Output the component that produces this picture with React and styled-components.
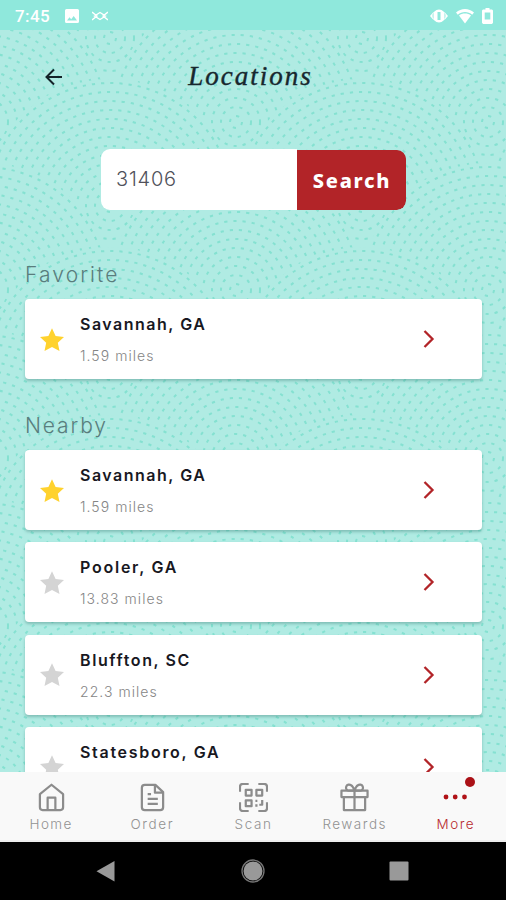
import styled, { createGlobalStyle } from "styled-components";

const rings = [6, 15, 24, 33, 42, 51, 60, 69, 78, 87, 96, 105, 114, 123];

const fans = [];
for (let row = 0; row < 11; row++) {
  for (let col = -1; col < 4; col++) {
    fans.push({ x: col * 252 + (row % 2) * 126 + 110, y: row * 84 + 8 });
  }
}

const locations = [
  { name: "Savannah, GA", miles: "1.59 miles", favorite: true, spacing: 1.5 },
  { name: "Pooler, GA", miles: "13.83 miles", spacing: 1.75 },
  { name: "Bluffton, SC", miles: "22.3 miles", spacing: 1.6 },
  { name: "Statesboro, GA", spacing: 1.7 },
];

const Pattern = () => (
  <PatternSvg viewBox="0 0 506 742" aria-hidden="true">
    {fans.map((fan) => (
      <g key={`${fan.x}-${fan.y}`} transform={`translate(${fan.x} ${fan.y})`}>
        <circle r="127" fill="#b0ebe3" />
        {rings.map((r) => (
          <circle
            key={r}
            r={r}
            fill="none"
            stroke="#85e1d1"
            strokeWidth="2"
            strokeDasharray="3.2 6"
          />
        ))}
      </g>
    ))}
  </PatternSvg>
);

const LocationCard = ({ location }) => (
  <Card>
    <Star viewBox="0 0 24 24" $active={location.favorite}>
      <path d="M12 .3l3.600 7.700 8.400 1-6.200 5.700 1.700 8.300L12 19l-7.500 4 1.700-8.300L0 9l8.400-1z" />
    </Star>
    <CardText>
      <Name $spacing={location.spacing}>{location.name}</Name>
      <Miles>{location.miles}</Miles>
    </CardText>
    <Chevron viewBox="0 0 12 20">
      <path d="M1.5 2L9.5 10l-8 8" />
    </Chevron>
  </Card>
);

const HomeIcon = () => (
  <NavIcon viewBox="0 0 30 30">
    <path d="M3 11.5L15 1.8l12 9.7v13.7a2.8 2.8 0 0 1-2.8 2.8H5.800a2.8 2.8 0 0 1-2.800-2.800z" />
    <path d="M11 28V15.2h8V28" />
  </NavIcon>
);

const OrderIcon = () => (
  <NavIcon viewBox="0 0 30 30">
    <path d="M18 2H7a3 3 0 0 0-3 3v20a3 3 0 0 0 3 3h16a3 3 0 0 0 3-3V9.500z" />
    <path d="M17.5 2v8h8M10 11.5h3.5M10 16.5h10.5M10 21.5h10.5" />
  </NavIcon>
);

const ScanIcon = () => (
  <NavIcon viewBox="0 0 30 30">
    <path d="M1 9V4a3 3 0 0 1 3-3h6M20 1h6a3 3 0 0 1 3 3v5M29 20v6a3 3 0 0 1-3 3h-6M10 29H4a3 3 0 0 1-3-3v-6" />
    <path d="M7 7h6v6H7zM18 7h6v6h-6zM7 18h6v6H7z" />
    <path d="M17 18.5h2M18 22v2.5M21 22.5h3v-5" />
  </NavIcon>
);

const RewardsIcon = () => (
  <NavIcon viewBox="0 0 30 30">
    <path d="M1.500 8h27v6.500h-27zM4 14.500h22V28H4zM15 8v20" />
    <path d="M15 8H9a3.2 3.2 0 1 1 2.5-5.6C13.5 3.5 15 8 15 8zM15 8h6a3.2 3.2 0 1 0-2.5-5.6C16.5 3.5 15 8 15 8z" />
  </NavIcon>
);

const MoreIcon = () => (
  <MoreSvg viewBox="0 0 30 30">
    <circle cx="6" cy="15" r="2.4" />
    <circle cx="15.200" cy="15" r="2.4" />
    <circle cx="24.500" cy="15" r="2.4" />
  </MoreSvg>
);

const tabs = [
  { label: "Home", Icon: HomeIcon, spacing: 1.35 },
  { label: "Order", Icon: OrderIcon, spacing: 1.6 },
  { label: "Scan", Icon: ScanIcon, spacing: 1.6 },
  { label: "Rewards", Icon: RewardsIcon, spacing: 1.5 },
  { label: "More", Icon: MoreIcon, spacing: 1.5, active: true },
];

export default function App() {
  return (
    <Phone>
      <GlobalStyle />
      <StatusBar>
        <Clock>7:45</Clock>
        <StatusSvg $width={16} viewBox="0 0 16 16">
          <path
            fillRule="evenodd"
            d="M2.5 1h11A1.5 1.5 0 0 1 15 2.5v11a1.5 1.5 0 0 1-1.5 1.5h-11A1.5 1.5 0 0 1 1 13.5v-11A1.5 1.5 0 0 1 2.5 1zM3 12.500h10L9.700 8l-2.500 3.200-1.700-2z"
          />
        </StatusSvg>
        <StatusSvg $width={16} viewBox="0 0 16 16">
          <path
            d="M0 4l5 4-5 4M16 4l-5 4 5 4M2.500 8L8 4.500 13.500 8 8 11.500z"
            fill="none"
            stroke="#fff"
            strokeWidth="1.4"
          />
        </StatusSvg>
        <StatusRight>
          <StatusSvg $width={18} viewBox="0 0 18 16">
            <path
              fillRule="evenodd"
              d="M0 8l3.500-4v8zM18 8l-3.500-4v8zM9 1.500a6.500 6.500 0 0 1 0 13 6.500 6.500 0 0 1 0-13zM7.500 4v8h3V4z"
            />
          </StatusSvg>
          <StatusSvg $width={18} viewBox="0 0 18 16">
            <path d="M0 4.500C5-.3 13-.3 18 4.500l-1.800 2.200c-4-3.700-10.400-3.700-14.400 0z" />
            <path d="M3 7.400c3.400-2.600 8.600-2.600 12 0L9 15.500z" />
          </StatusSvg>
          <StatusSvg $width={11} viewBox="0 0 11 16">
            <path
              fillRule="evenodd"
              d="M3.5 0h4v1.5H10l1 1v12.200L10 16H1l-1-1.300V2.500l1-1h2.500zM2.700 4.500v7h5.600v-7z"
            />
          </StatusSvg>
        </StatusRight>
      </StatusBar>

      <Screen>
        <Pattern />
        <Content>
          <Header>
            <BackArrow viewBox="0 0 18 18">
              <path d="M17 9H2M9 1.5L1.5 9 9 16.5" />
            </BackArrow>
            <Title>Locations</Title>
          </Header>
          <SearchBar>
            <SearchInput defaultValue="31406" aria-label="Zip code" />
            <SearchButton>Search</SearchButton>
          </SearchBar>
          <SectionTitle $spacing={2.1}>Favorite</SectionTitle>
          <LocationCard location={locations[0]} />
          <SectionTitle $spacing={1.9}>Nearby</SectionTitle>
          <CardList>
            {locations.map((location) => (
              <LocationCard key={location.name} location={location} />
            ))}
          </CardList>
        </Content>
      </Screen>

      <TabBar>
        {tabs.map(({ label, Icon, active, spacing }) => (
          <Tab key={label} $active={active}>
            <Icon />
            {active && <Badge />}
            <TabLabel $spacing={spacing}>{label}</TabLabel>
          </Tab>
        ))}
      </TabBar>

      <SystemBar>
        <SystemSvg viewBox="0 0 24 24">
          <path d="M20.5 2v20.5L2.5 12.2z" />
        </SystemSvg>
        <SystemSvg viewBox="0 0 24 24">
          <circle cx="12" cy="12" r="11" fill="none" stroke="#777" strokeWidth="1.3" />
          <circle cx="12" cy="12" r="9.5" />
        </SystemSvg>
        <SystemSvg viewBox="0 0 24 24">
          <rect x="2.5" y="2.5" width="19" height="19" rx="1" />
        </SystemSvg>
      </SystemBar>
    </Phone>
  );
}

const GlobalStyle = createGlobalStyle`
  * {
    box-sizing: border-box;
  }

  body {
    margin: 0;
    font-family: Inter, "Liberation Sans", sans-serif;
  }
`;

const Phone = styled.div`
  width: 506px;
  height: 900px;
  display: flex;
  flex-direction: column;
  overflow: hidden;
`;

const StatusBar = styled.div`
  height: 30px;
  flex-shrink: 0;
  display: flex;
  align-items: center;
  padding: 1px 13px 0 15px;
  background-color: #8fe8dc;
`;

const Clock = styled.span`
  width: 49px;
  color: #ffffff;
  font-family: Roboto, sans-serif;
  font-size: 17px;
  font-weight: 500;
  letter-spacing: 0.4px;
`;

const StatusSvg = styled.svg`
  width: ${({ $width }) => $width}px;
  height: 16px;
  margin-right: 12px;
  fill: #ffffff;
`;

const StatusRight = styled.div`
  display: flex;
  margin-left: auto;

  ${StatusSvg} {
    margin-right: 0;
    margin-left: 8px;
  }
`;

const Screen = styled.main`
  position: relative;
  height: 742px;
  flex-shrink: 0;
  overflow: hidden;
  background-color: #b0ebe3;
`;

const PatternSvg = styled.svg`
  position: absolute;
  inset: 0;
  width: 506px;
  height: 742px;
`;

const Content = styled.div`
  position: relative;
  padding: 0 24px 0 25px;
`;

const Header = styled.header`
  height: 119px;
  display: grid;
  grid-template-columns: 60px 1fr 66px;
  align-items: start;
  padding-top: 27px;
`;

const BackArrow = styled.svg`
  width: 18px;
  height: 18px;
  margin: 11px 0 0 20px;
  fill: none;
  stroke: #142329;
  stroke-width: 2;
`;

const Title = styled.h1`
  margin: 0;
  color: #17272e;
  font-family: "Liberation Serif", serif;
  font-size: 27px;
  font-style: italic;
  font-weight: 400;
  line-height: 38px;
  letter-spacing: 2px;
  text-align: center;
  -webkit-text-stroke: 0.4px #17272e;
`;

const SearchBar = styled.div`
  width: 305px;
  height: 61px;
  display: flex;
  margin-left: 76px;
  overflow: hidden;
  border-radius: 9px;
`;

const SearchInput = styled.input`
  width: 196px;
  padding: 0 15px 2px;
  border: none;
  outline: none;
  background-color: #ffffff;
  color: #50515a;
  font-family: inherit;
  font-size: 20px;
  font-weight: 300;
  letter-spacing: 0.8px;
`;

const SearchButton = styled.button`
  width: 109px;
  margin-top: 1px;
  padding: 0 0 0 1px;
  border: none;
  border-radius: 0 9px 9px 0;
  background-color: #b22428;
  color: #ffffff;
  font-family: "Noto Sans", sans-serif;
  font-size: 20px;
  font-weight: 800;
  letter-spacing: 1.7px;
`;

const SectionTitle = styled.h2`
  margin: 0;
  padding-top: 52px;
  height: 89px;
  color: #597d7d;
  font-size: 21px;
  font-weight: 300;
  line-height: 26px;
  letter-spacing: ${({ $spacing }) => $spacing}px;

  article + & {
    height: 71px;
    padding-top: 34px;
  }
`;

const CardList = styled.div`
  display: flex;
  flex-direction: column;
  gap: 12.3px;
`;

const Card = styled.article`
  height: 80px;
  flex-shrink: 0;
  display: flex;
  align-items: center;
  padding-left: 15px;
  border-radius: 4px;
  background-color: #ffffff;
  box-shadow: 0 2px 3px rgba(40, 110, 100, 0.35);
`;

const Star = styled.svg`
  width: 24px;
  height: 24px;
  margin-top: 1px;
  fill: ${({ $active }) => ($active ? "#ffd22e" : "#d4d4d4")};
`;

const CardText = styled.div`
  width: 300px;
  height: 64px;
  margin: 2px 0 0 16px;
`;

const Name = styled.h3`
  margin: 0;
  color: #18181f;
  font-size: 16px;
  font-weight: 600;
  line-height: 32px;
  letter-spacing: ${({ $spacing }) => $spacing}px;
`;

const Miles = styled.p`
  margin: 0;
  color: #858585;
  font-size: 14px;
  font-weight: 300;
  line-height: 32px;
  letter-spacing: 1.05px;
`;

const Chevron = styled.svg`
  width: 12px;
  height: 20px;
  margin-left: 43px;
  fill: none;
  stroke: #b22428;
  stroke-width: 2.3;
`;

const TabBar = styled.nav`
  height: 70px;
  flex-shrink: 0;
  display: grid;
  grid-template-columns: repeat(5, 1fr);
  border-bottom: 2px solid #ededed;
  background-color: #f9f9f9;
`;

const Tab = styled.div`
  position: relative;
  display: flex;
  flex-direction: column;
  align-items: center;
  padding-top: 10px;
  color: ${({ $active }) => ($active ? "#b8292f" : "#929292")};
`;

const TabLabel = styled.span`
  margin: 3px 0 0 1px;
  font-size: 13.5px;
  font-weight: 300;
  line-height: 18px;
  letter-spacing: ${({ $spacing }) => $spacing}px;
`;

const NavIcon = styled.svg`
  width: 29px;
  height: 29px;
  margin: 1px 0 0 1px;
  fill: none;
  stroke: #8c8c8c;
  stroke-width: 2.3;
  stroke-linejoin: round;
`;

const MoreSvg = styled.svg`
  width: 30px;
  height: 30px;
  fill: #b01217;
`;

const Badge = styled.span`
  position: absolute;
  top: 5px;
  right: 31px;
  width: 10px;
  height: 10px;
  border-radius: 50%;
  background-color: #ab1117;
`;

const SystemBar = styled.div`
  height: 58px;
  flex-shrink: 0;
  display: flex;
  align-items: center;
  justify-content: space-between;
  padding: 0 95px 0 94px;
  background-color: #000000;
`;

const SystemSvg = styled.svg`
  width: 24px;
  height: 24px;
  fill: #999999;
`;
